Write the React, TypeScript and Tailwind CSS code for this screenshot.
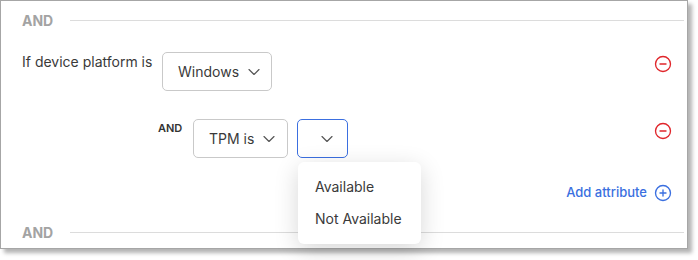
import React from 'react'
import { ChevronDown, CircleMinus, CirclePlus } from 'lucide-react'

function SelectBox({
  label,
  width,
  pad,
  active,
  children
}: {
  label?: string
  width: string
  pad: string
  active?: boolean
  children?: React.ReactNode
}) {
  return (
    <div
      className={`relative flex h-[39px] shrink-0 items-center gap-[5px] rounded-[5px] border bg-white ${width} ${pad} ${
        active ? 'border-[#3b6fe0]' : 'border-[#c9c9c9]'
      }`}
    >
      {label && <span className="whitespace-nowrap text-[14px] text-[#3a3a3a]">{label}</span>}
      <ChevronDown className="h-[20px] w-[20px] shrink-0 text-[#555]" strokeWidth={1.4} />
      {children}
    </div>
  )
}

function Divider() {
  return (
    <div className="flex h-[20px] items-center">
      <span className="w-[48px] text-[14px] font-bold text-[#a3a3a3]">AND</span>
      <div className="h-px flex-1 bg-[#dcdcdc]" />
    </div>
  )
}

export default function App() {
  return (
    <div className="h-[260px] w-[698px] bg-white font-['Inter',sans-serif]">
      <div className="h-[249px] w-[688px] border border-[#a6a6a6] bg-white pl-[21px] pr-[3px] shadow-[4px_4px_4px_rgba(0,0,0,0.3)]">
        <div className="mt-[9px]">
          <Divider />
        </div>

        {/* Platform condition */}
        <div className="mt-[22px] flex items-start">
          <span className="mr-[9px] w-[131px] whitespace-nowrap text-[14px] leading-[20px] text-[#3a3a3a]">
            If device platform is
          </span>
          <SelectBox label="Windows" width="w-[110px]" pad="pl-[15px]" />
          <CircleMinus className="ml-auto mr-[12px] mt-[3px] h-[18px] w-[18px] text-[#e0262b]" strokeWidth={1.8} />
        </div>

        {/* Attribute condition */}
        <div className="mt-[28px] flex items-start">
          <span className="ml-[136px] mr-[8px] mt-[2px] w-[27px] text-[11px] font-semibold leading-[14px] text-[#333]">
            AND
          </span>
          <SelectBox label="TPM is" width="w-[95px]" pad="pl-[15px]" />
          <div className="ml-[9px]">
            <SelectBox width="w-[51px]" pad="pl-[19px]" active>
              <div className="absolute left-0 top-[42px] z-10 w-[123px] rounded-[6px] bg-white py-[9px] shadow-[0_6px_24px_rgba(0,0,0,0.16)]">
                <div className="whitespace-nowrap px-[17px] py-[6px] text-[14px] leading-[20px] text-[#3a3a3a]">Available</div>
                <div className="whitespace-nowrap px-[17px] py-[6px] text-[14px] leading-[20px] text-[#3a3a3a]">Not Available</div>
              </div>
            </SelectBox>
          </div>
          <CircleMinus className="ml-auto mr-[12px] mt-[3px] h-[18px] w-[18px] text-[#e0262b]" strokeWidth={1.8} />
        </div>

        <div className="mt-[25px] flex h-[20px] items-center justify-end pr-[12px]">
          <span className="mr-[7px] text-[13px] font-medium text-[#3a6fe0]">Add attribute</span>
          <CirclePlus className="h-[18px] w-[18px] text-[#3a6fe0]" strokeWidth={1.8} />
        </div>

        <div className="mt-[19px]">
          <Divider />
        </div>
      </div>
    </div>
  )
}
